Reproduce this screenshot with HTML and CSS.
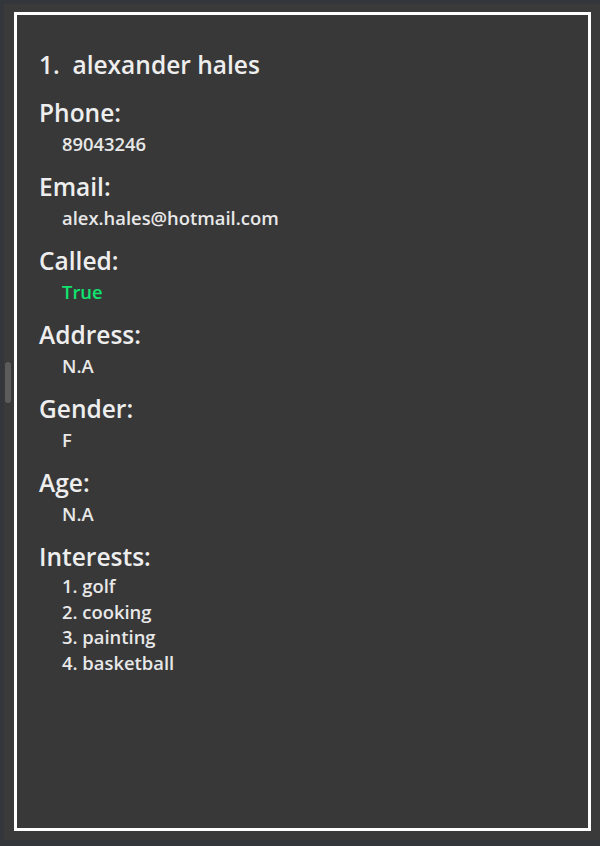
FILE: index.html
```html
<!DOCTYPE html>
<html>
<head>
<meta charset="utf-8">
<link rel="stylesheet" href="styles.css">
</head>
<body>
<div class="window">
  <div class="scrollbar"></div>
  <div class="card">
    <div class="title">1.&nbsp; alexander hales</div>
    <div class="field">
      <div class="label">Phone:</div>
      <div class="value">89043246</div>
    </div>
    <div class="field">
      <div class="label">Email:</div>
      <div class="value">alex.hales@hotmail.com</div>
    </div>
    <div class="field">
      <div class="label">Called:</div>
      <div class="value called">True</div>
    </div>
    <div class="field">
      <div class="label">Address:</div>
      <div class="value">N.A</div>
    </div>
    <div class="field">
      <div class="label">Gender:</div>
      <div class="value">F</div>
    </div>
    <div class="field">
      <div class="label">Age:</div>
      <div class="value">N.A</div>
    </div>
    <div class="field">
      <div class="label">Interests:</div>
      <ol class="interests">
        <li>1. golf</li>
        <li>2. cooking</li>
        <li>3. painting</li>
        <li>4. basketball</li>
      </ol>
    </div>
  </div>
</div>
</body>
</html>
```

FILE: styles.css
```css
html, body {
  margin: 0;
  padding: 0;
}
body {
  width: 600px;
  height: 846px;
  background: #33373b;
  font-family: "Open Sans", "Noto Sans", sans-serif;
  font-weight: 600;
  overflow: hidden;
}
.window {
  position: relative;
  box-sizing: border-box;
  margin: 4px 0 0 4px;
  height: 836px;
  padding: 8px 9px 9px 10px;
  background: #3a3a3a;
  display: flex;
}
.scrollbar {
  position: absolute;
  left: 1px;
  top: 358px;
  width: 6px;
  height: 41px;
  border-radius: 3px;
  background: #5c5c5c;
}
.card {
  flex: 1;
  border: 3px solid #ffffff;
  background: #383838;
  padding: 35px 22px 0 22px;
  color: #eeeeee;
}
.title {
  font-size: 24.5px;
  line-height: 30px;
  margin-bottom: 18px;
}
.field {
  margin-bottom: 14px;
}
.label {
  font-size: 24.5px;
  line-height: 30px;
}
.value {
  font-size: 18.4px;
  line-height: 28px;
  margin-top: 2px;
  padding-left: 23px;
  color: #e8e8e8;
}
.called {
  color: #0fe46f;
}
.interests {
  list-style: none;
  margin: 1px 0 0 0;
  padding: 0 0 0 23px;
  font-size: 18.4px;
  line-height: 25.5px;
  color: #e8e8e8;
}
```
